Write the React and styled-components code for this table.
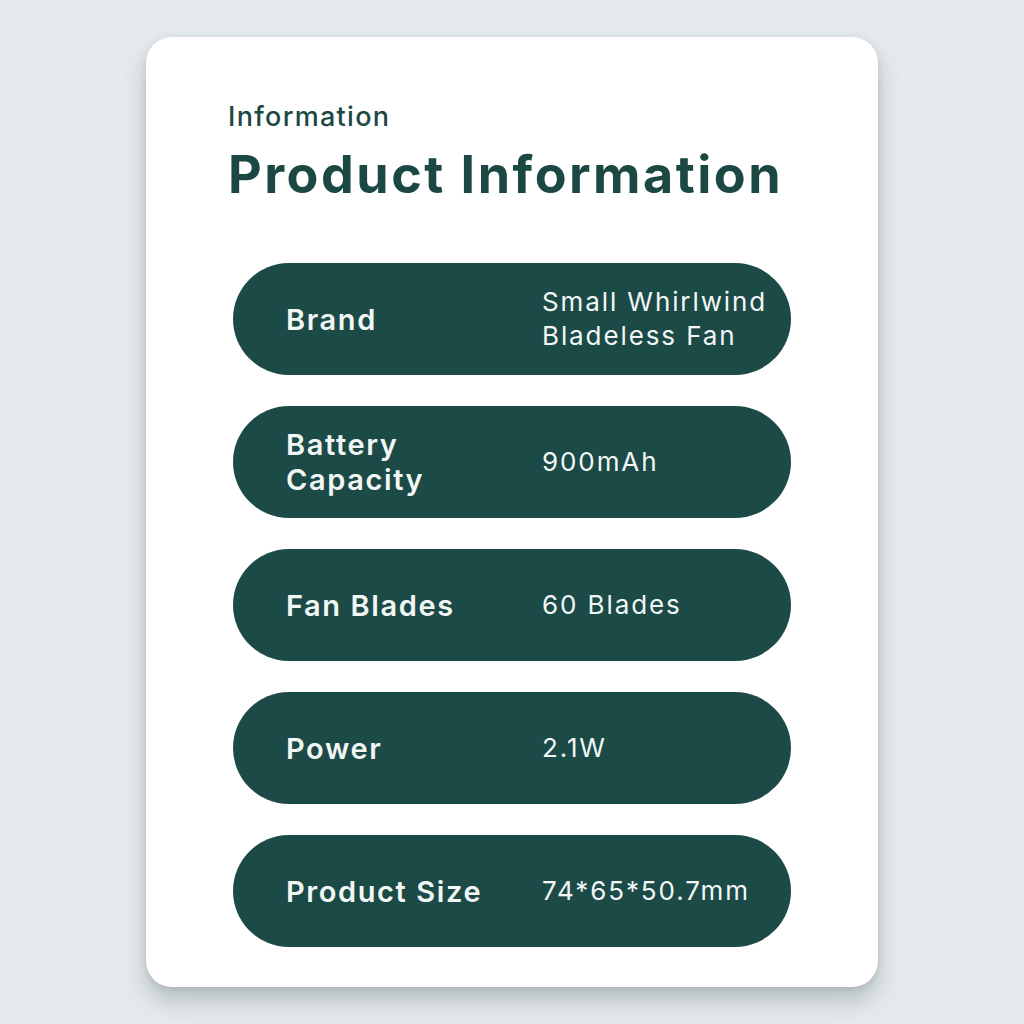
import styled, { createGlobalStyle } from "styled-components";

const GlobalStyle = createGlobalStyle`
  html, body {
    margin: 0;
    padding: 0;
    background: #e5ebed;
  }
  body {
    font-family: "Inter", "Noto Sans", sans-serif;
  }
`;

const Page = styled.div`
  width: 1024px;
  height: 1024px;
  box-sizing: border-box;
  padding-top: 37px;
  display: flex;
  justify-content: center;
  align-items: flex-start;
  background: #e5ebed;
`;

const Card = styled.div`
  width: 732px;
  height: 950px;
  box-sizing: border-box;
  background: #ffffff;
  border-radius: 26px;
  box-shadow: 0 14px 24px rgba(60, 75, 80, 0.28), 0 2px 6px rgba(60, 75, 80, 0.12);
  padding: 60px 87px 0 87px;
  display: flex;
  flex-direction: column;
`;

const Eyebrow = styled.div`
  margin-left: -5px;
  font-size: 27px;
  font-weight: 500;
  line-height: 40px;
  color: #1b4843;
  letter-spacing: 1.3px;
`;

const Title = styled.h1`
  margin: 6px 0 0 -5px;
  font-size: 52px;
  font-weight: 700;
  line-height: 64px;
  color: #1b4843;
  letter-spacing: 2.5px;
`;

const List = styled.div`
  margin-top: 56px;
  display: flex;
  flex-direction: column;
  gap: 31px;
`;

const Row = styled.div`
  height: 112px;
  box-sizing: border-box;
  border-radius: 56px;
  background: #1c4a46;
  padding: 0 16px 0 53px;
  display: grid;
  grid-template-columns: 256px 1fr;
  align-items: center;
`;

const Label = styled.div`
  font-size: 29px;
  font-weight: 600;
  line-height: 35px;
  color: #f2f7f5;
  letter-spacing: 1.6px;
`;

const Value = styled.div`
  font-size: 26px;
  font-weight: 400;
  line-height: 34px;
  color: #f2f7f5;
  letter-spacing: 1.9px;
`;

const rows = [
  { label: "Brand", value: ["Small Whirlwind", "Bladeless Fan"] },
  { label: ["Battery", "Capacity"], value: "900mAh" },
  { label: "Fan Blades", value: "60 Blades" },
  { label: "Power", value: "2.1W" },
  { label: "Product Size", value: "74*65*50.7mm" },
];

const lines = (t) =>
  Array.isArray(t) ? t.map((l, i) => <div key={i}>{l}</div>) : t;

export default function App() {
  return (
    <>
      <GlobalStyle />
      <Page>
        <Card>
          <Eyebrow>Information</Eyebrow>
          <Title>Product Information</Title>
          <List>
            {rows.map((r, i) => (
              <Row key={i}>
                <Label>{lines(r.label)}</Label>
                <Value>{lines(r.value)}</Value>
              </Row>
            ))}
          </List>
        </Card>
      </Page>
    </>
  );
}
